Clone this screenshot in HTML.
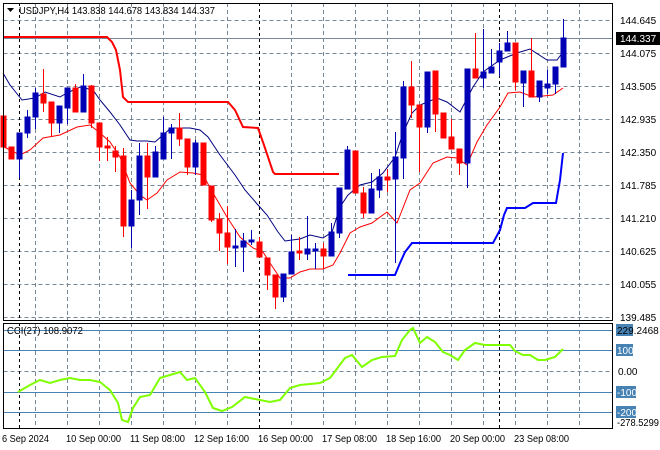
<!DOCTYPE html>
<html><head><meta charset="utf-8"><style>
html,body{margin:0;padding:0;background:#fff;width:660px;height:450px;overflow:hidden}
svg{display:block}
text{font-family:"Liberation Sans",sans-serif;font-size:10px}
</style></head><body>
<svg width="660" height="450" viewBox="0 0 660 450" xmlns="http://www.w3.org/2000/svg">
<rect width="660" height="450" fill="#fff"/>
<g stroke="#778899" stroke-dasharray="4,3" stroke-width="1">
<path d="M3.5 20.5H612M3.5 53.5H612M3.5 86.5H612M3.5 119.5H612M3.5 152.5H612M3.5 185.5H612M3.5 218.5H612M3.5 251.5H612M3.5 284.5H612M3.5 317.5H612M3.5 371.5H612"/>
<path d="M35.5 3V320M67.5 3V320M99.5 3V320M131.5 3V320M163.5 3V320M195.5 3V320M227.5 3V320M291.5 3V320M323.5 3V320M355.5 3V320M387.5 3V320M419.5 3V320M451.5 3V320M483.5 3V320M515.5 3V320M547.5 3V320M579.5 3V320"/>
<path d="M35.5 323V428M67.5 323V428M99.5 323V428M131.5 323V428M163.5 323V428M195.5 323V428M227.5 323V428M291.5 323V428M323.5 323V428M355.5 323V428M387.5 323V428M419.5 323V428M451.5 323V428M483.5 323V428M515.5 323V428M547.5 323V428M579.5 323V428"/>
</g>
<g stroke="#000" stroke-dasharray="3,3" stroke-width="1">
<path d="M19.5 3V320M259.5 3V320M499.5 3V320M19.5 323V428M259.5 323V428M499.5 323V428"/>
</g>
<path d="M3 38.5H612" stroke="#778899" stroke-width="1"/>
<g stroke="#4682b4" stroke-width="1">
<path d="M3 330.5H612M3 350.5H612M3 392.5H612M3 412.5H612"/>
</g>
<polyline fill="none" stroke="#ff0000" stroke-width="2" points="3,37 107,37 112,42 116,50 120,70 123,97 128,102 228,102 235,110 243,127 258,128 265,148 273,172 275,174 339,174"/>
<polyline fill="none" stroke="#0000ff" stroke-width="2" points="348,275 395,275 400,263 405,252 412,243 493,243 500,230 504,215 507,208 525,208 533,203 556,203 560,180 563,153"/>
<polyline fill="none" stroke="#000080" stroke-width="1" points="3,73 10,85 22,100 35,98 45,92 60,97 67,93 80,87 93,90 100,100 110,112 120,125 130,140 137,141 147,141 155,142 163,135 171,128 180,128 190,128 200,130 208,137 220,155 235,175 245,190 258,205 267,215 278,232 285,241 292,240 300,239 310,235 323,238 332,232 340,207 348,195 360,185 372,182 383,173 395,157 403,133 412,113 420,105 437,98 447,102 460,112 473,87 483,72 500,60 517,53 530,49 547,60 557,60 563,52"/>
<polyline fill="none" stroke="#ff0000" stroke-width="1" points="4,147 20,155 30,150 43,138 60,135 77,127 90,125 100,133 110,142 120,157 130,183 140,195 147,200 157,193 167,180 180,172 193,173 203,175 213,193 227,217 240,237 253,248 263,252 270,263 280,278 290,278 300,272 310,269 323,269 333,265 340,253 350,233 360,227 372,223 387,212 397,223 410,190 420,183 433,163 447,157 457,158 467,165 477,142 487,125 500,107 508,93 520,92 533,97 553,95 563,88"/>
<g stroke-width="1">
<g stroke="#ff0000" fill="#ff0000">
<path d="M3.5 108V185M43.5 69V112M51.5 102V136M75.5 84V112M91.5 85V128M99.5 123V161M107.5 137V161M115.5 146V172M123.5 148V237M147.5 143V209M179.5 113V146M187.5 139V175M203.5 143V185M211.5 186V222M219.5 213V251M227.5 206V264M259.5 237V257M267.5 258V290M275.5 275V309M299.5 237V260M323.5 243V269M355.5 151V193M363.5 187V218M387.5 169V192M411.5 61V118M419.5 105V172M435.5 71V132M443.5 113V138M451.5 119V149M459.5 149V175M475.5 33V78M515.5 43V90M531.5 38V97"/>
<rect x="1" y="116" width="5" height="31"/><rect x="9" y="147" width="5" height="12"/><rect x="41" y="94" width="5" height="9"/><rect x="49" y="102" width="5" height="21"/><rect x="73" y="88" width="5" height="24"/><rect x="89" y="86" width="5" height="37"/><rect x="97" y="123" width="5" height="24"/><rect x="105" y="146" width="5" height="2"/><rect x="113" y="151" width="5" height="6"/><rect x="121" y="156" width="5" height="70"/><rect x="145" y="156" width="5" height="21"/><rect x="177" y="128" width="5" height="11"/><rect x="185" y="139" width="5" height="28"/><rect x="201" y="143" width="5" height="42"/><rect x="209" y="186" width="5" height="34"/><rect x="217" y="219" width="5" height="14"/><rect x="225" y="233" width="5" height="14"/><rect x="257" y="242" width="5" height="15"/><rect x="265" y="258" width="5" height="17"/><rect x="273" y="275" width="5" height="22"/><rect x="297" y="251" width="5" height="2"/><rect x="321" y="249" width="5" height="7"/><rect x="353" y="151" width="5" height="42"/><rect x="361" y="193" width="5" height="20"/><rect x="385" y="177" width="5" height="3"/><rect x="409" y="87" width="5" height="18"/><rect x="417" y="105" width="5" height="22"/><rect x="433" y="71" width="5" height="43"/><rect x="441" y="113" width="5" height="25"/><rect x="449" y="137" width="5" height="12"/><rect x="457" y="149" width="5" height="14"/><rect x="473" y="69" width="5" height="9"/><rect x="513" y="43" width="5" height="39"/><rect x="529" y="71" width="5" height="26"/>
</g>
<g stroke="#0000b4" fill="#0000b4">
<path d="M19.5 133V178M27.5 110V138M35.5 88V129M59.5 106V133M67.5 88V124M83.5 74V112M131.5 190V248M139.5 143V215M155.5 146V177M163.5 117V159M171.5 124V159M195.5 140V175M235.5 229V267M243.5 233V272M251.5 230V245M283.5 274V302M291.5 235V274M307.5 216V260M315.5 243V269M331.5 223V256M339.5 188V238M347.5 146V189M371.5 173V213M379.5 169V198M395.5 132V263M403.5 81V179M427.5 72V133M467.5 69V188M483.5 29V88M491.5 49V73M499.5 43V76M507.5 31V51M523.5 71V107M539.5 81V102M547.5 70V94M555.5 67V94M563.5 19V67"/>
<rect x="17" y="133" width="5" height="26"/><rect x="25" y="117" width="5" height="16"/><rect x="33" y="93" width="5" height="24"/><rect x="57" y="106" width="5" height="17"/><rect x="65" y="88" width="5" height="20"/><rect x="81" y="86" width="5" height="26"/><rect x="129" y="200" width="5" height="26"/><rect x="137" y="156" width="5" height="44"/><rect x="153" y="152" width="5" height="25"/><rect x="161" y="133" width="5" height="26"/><rect x="169" y="128" width="5" height="5"/><rect x="193" y="143" width="5" height="24"/><rect x="233" y="246" width="5" height="2"/><rect x="241" y="241" width="5" height="6"/><rect x="249" y="240" width="5" height="2"/><rect x="281" y="274" width="5" height="23"/><rect x="289" y="252" width="5" height="22"/><rect x="305" y="249" width="5" height="5"/><rect x="313" y="249" width="5" height="2"/><rect x="329" y="232" width="5" height="24"/><rect x="337" y="188" width="5" height="45"/><rect x="345" y="150" width="5" height="39"/><rect x="369" y="189" width="5" height="24"/><rect x="377" y="177" width="5" height="13"/><rect x="393" y="157" width="5" height="22"/><rect x="401" y="87" width="5" height="71"/><rect x="425" y="72" width="5" height="55"/><rect x="465" y="69" width="5" height="94"/><rect x="481" y="72" width="5" height="6"/><rect x="489" y="67" width="5" height="6"/><rect x="497" y="51" width="5" height="11"/><rect x="505" y="43" width="5" height="8"/><rect x="521" y="71" width="5" height="12"/><rect x="537" y="81" width="5" height="16"/><rect x="545" y="84" width="5" height="4"/><rect x="553" y="67" width="5" height="17"/><rect x="561" y="38" width="5" height="29"/>
</g>
</g>
<polyline fill="none" stroke="#7fff00" stroke-width="2" points="18,392 30,385 40,380 50,383 60,380 70,378 80,380 90,380 100,382 110,390 118,403 122,420 128,422 133,408 140,397 150,395 160,378 170,375 180,372 187,380 195,378 205,392 213,408 222,411 232,407 245,397 255,399 270,402 280,400 290,388 300,385 320,383 330,378 345,358 352,355 362,367 372,360 382,357 395,356 402,340 410,330 413,328 420,343 427,337 435,342 443,352 450,355 458,360 465,350 475,343 485,345 500,345 510,345 515,351 523,355 530,355 538,360 545,360 555,357 563,349"/>
<rect x="3.5" y="3.5" width="609" height="317" fill="none" stroke="#000"/>
<rect x="3.5" y="323.5" width="609" height="105" fill="none" stroke="#000"/>
<path d="M7 8h7l-3.5 4z" fill="#000"/>
<text x="19" y="14" fill="#000" textLength="196" lengthAdjust="spacingAndGlyphs">USDJPY,H4  143.838 144.678 143.834 144.337</text>
<text x="7" y="334" fill="#000" textLength="76" lengthAdjust="spacingAndGlyphs">CCI(27) 108.9072</text>
<g fill="#000">
<text x="620" y="24">144.645</text>
<text x="620" y="57">144.075</text>
<text x="620" y="90">143.505</text>
<text x="620" y="123">142.935</text>
<text x="620" y="156">142.350</text>
<text x="620" y="189">141.785</text>
<text x="620" y="222">141.210</text>
<text x="620" y="255">140.625</text>
<text x="620" y="288">140.055</text>
<text x="620" y="321">139.485</text>
</g>
<rect x="616" y="32" width="44" height="13" fill="#000"/>
<text x="620" y="42" fill="#fff">144.337</text>
<g fill="#4682b4">
<rect x="616" y="324" width="17" height="12"/>
<rect x="616" y="344" width="17" height="12"/>
<rect x="616" y="386" width="20" height="12"/>
<rect x="616" y="406" width="20" height="12"/>
</g>
<text x="617" y="334" fill="#000">229.2468</text>
<text x="617" y="354" fill="#fff">100</text>
<text x="618" y="375" fill="#000">0.00</text>
<text x="617" y="396" fill="#fff">-100</text>
<text x="617" y="416" fill="#fff">-200</text>
<text x="617" y="426" fill="#000" textLength="42" lengthAdjust="spacingAndGlyphs">-278.5299</text>
<g fill="#000">
<text x="2" y="442" textLength="47" lengthAdjust="spacingAndGlyphs">6 Sep 2024</text>
<text x="66" y="442" textLength="55" lengthAdjust="spacingAndGlyphs">10 Sep 00:00</text>
<text x="130" y="442" textLength="55" lengthAdjust="spacingAndGlyphs">11 Sep 08:00</text>
<text x="194" y="442" textLength="55" lengthAdjust="spacingAndGlyphs">12 Sep 16:00</text>
<text x="258" y="442" textLength="55" lengthAdjust="spacingAndGlyphs">16 Sep 00:00</text>
<text x="322" y="442" textLength="55" lengthAdjust="spacingAndGlyphs">17 Sep 08:00</text>
<text x="386" y="442" textLength="55" lengthAdjust="spacingAndGlyphs">18 Sep 16:00</text>
<text x="450" y="442" textLength="55" lengthAdjust="spacingAndGlyphs">20 Sep 00:00</text>
<text x="514" y="442" textLength="55" lengthAdjust="spacingAndGlyphs">23 Sep 08:00</text>
</g>
</svg>
</body></html>
